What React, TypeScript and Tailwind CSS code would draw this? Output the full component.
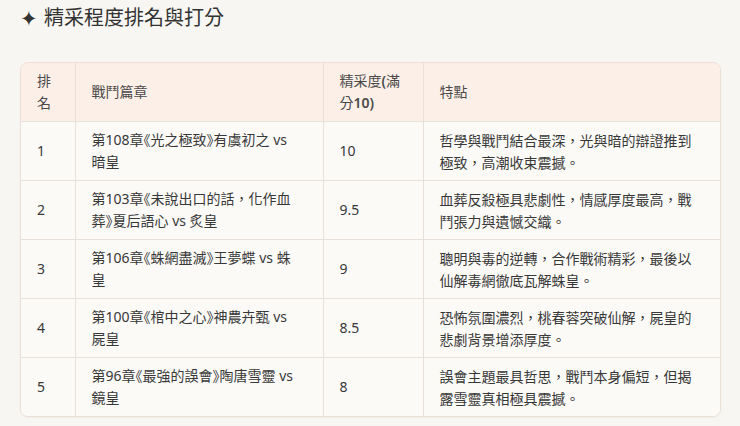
const rows = [
  {
    rank: "1",
    chapter: [["第108章", "光之極致", "有虞初之 vs"], "暗皇"],
    score: "10",
    note: "哲學與戰鬥結合最深，光與暗的辯證推到極致，高潮收束震撼。",
  },
  {
    rank: "2",
    chapter: [["第103章", "未說出口的話，化作血", ""], "葬》夏后語心 vs 炙皇"],
    score: "9.5",
    note: "血葬反殺極具悲劇性，情感厚度最高，戰鬥張力與遺憾交織。",
  },
  {
    rank: "3",
    chapter: [["第106章", "蛛網盡滅", "王夢蝶 vs 蛛"], "皇"],
    score: "9",
    note: "聰明與毒的逆轉，合作戰術精彩，最後以仙解毒網徹底瓦解蛛皇。",
  },
  {
    rank: "4",
    chapter: [["第100章", "棺中之心", "神農卉甄 vs"], "屍皇"],
    score: "8.5",
    note: "恐怖氛圍濃烈，桃春蓉突破仙解，屍皇的悲劇背景增添厚度。",
  },
  {
    rank: "5",
    chapter: [["第96章", "最強的誤會", "陶唐雪靈 vs"], "鏡皇"],
    score: "8",
    note: "誤會主題最具哲思，戰鬥本身偏短，但揭露雪靈真相極具震撼。",
  },
] as const

function Bracket({ children }: { children: string }) {
  return <span className="[font-feature-settings:'halt']">{children}</span>
}

function Chapter({ line1, line2 }: { line1: readonly [string, string, string]; line2: string }) {
  const [pre, title, post] = line1
  // row 2 opens the title on line 1 and closes it on line 2
  const closesLater = post === ""
  const [rest2a, rest2b] = line2.startsWith("葬》") ? ["葬", line2.slice(2)] : ["", line2]
  return (
    <>
      <span className="block">
        {pre}
        <Bracket>《</Bracket>
        {title}
        {!closesLater && <Bracket>》</Bracket>}
        {post}
      </span>
      <span className="block">
        {rest2a}
        {rest2a && <Bracket>》</Bracket>}
        {rest2b}
      </span>
    </>
  )
}

export default function App() {
  return (
    <div
      lang="zh-TW"
      className="min-h-[426px] bg-[#f8f6f2] px-5 pt-1 pb-2 text-[#383838]"
      style={{ fontFamily: '"Noto Sans", "Noto Sans CJK TC", sans-serif' }}
    >
      <h2 className="flex items-center gap-[6px] text-[20px] leading-7 text-[#333]">
        <span className="text-[21px] leading-none">✦</span>
        <span>精采程度排名與打分</span>
      </h2>

      <div className="mt-[30px] w-[701px] overflow-hidden rounded-lg border border-[#ebe0d7] shadow-[0_1px_2px_rgba(0,0,0,0.04)]">
        <table className="w-full table-fixed border-collapse text-[14px] leading-[22px]">
          <colgroup>
            <col className="w-[54px]" />
            <col className="w-[248px]" />
            <col className="w-[100px]" />
            <col />
          </colgroup>
          <thead>
            <tr className="bg-[#fcefe7] text-left text-[#4a4a4a]">
              <th className="px-4 py-[7px] font-normal">排名</th>
              <th className="border-l border-[#ebe0d7] px-4 py-[7px] font-normal">戰鬥篇章</th>
              <th className="border-l border-[#ebe0d7] px-4 py-[7px] font-normal">
                精采度<span className="font-semibold">(</span>滿分<span className="font-semibold">10)</span>
              </th>
              <th className="border-l border-[#ebe0d7] px-4 py-[7px] font-normal">特點</th>
            </tr>
          </thead>
          <tbody className="bg-[#fbfaf7]">
            {rows.map((r) => (
              <tr key={r.rank} className="border-t border-[#e8e1da]">
                <td className="px-4 py-[7px]">{r.rank}</td>
                <td className="border-l border-[#e8e1da] px-4 py-[7px] whitespace-nowrap">
                  <Chapter line1={r.chapter[0]} line2={r.chapter[1]} />
                </td>
                <td className="border-l border-[#e8e1da] px-4 py-[7px]">{r.score}</td>
                <td
                  className="border-l border-[#e8e1da] px-4 py-[7px]"
                  style={{ fontFamily: '"Noto Sans CJK TC", sans-serif' }}
                >
                  {r.note}
                </td>
              </tr>
            ))}
          </tbody>
        </table>
      </div>
    </div>
  )
}
